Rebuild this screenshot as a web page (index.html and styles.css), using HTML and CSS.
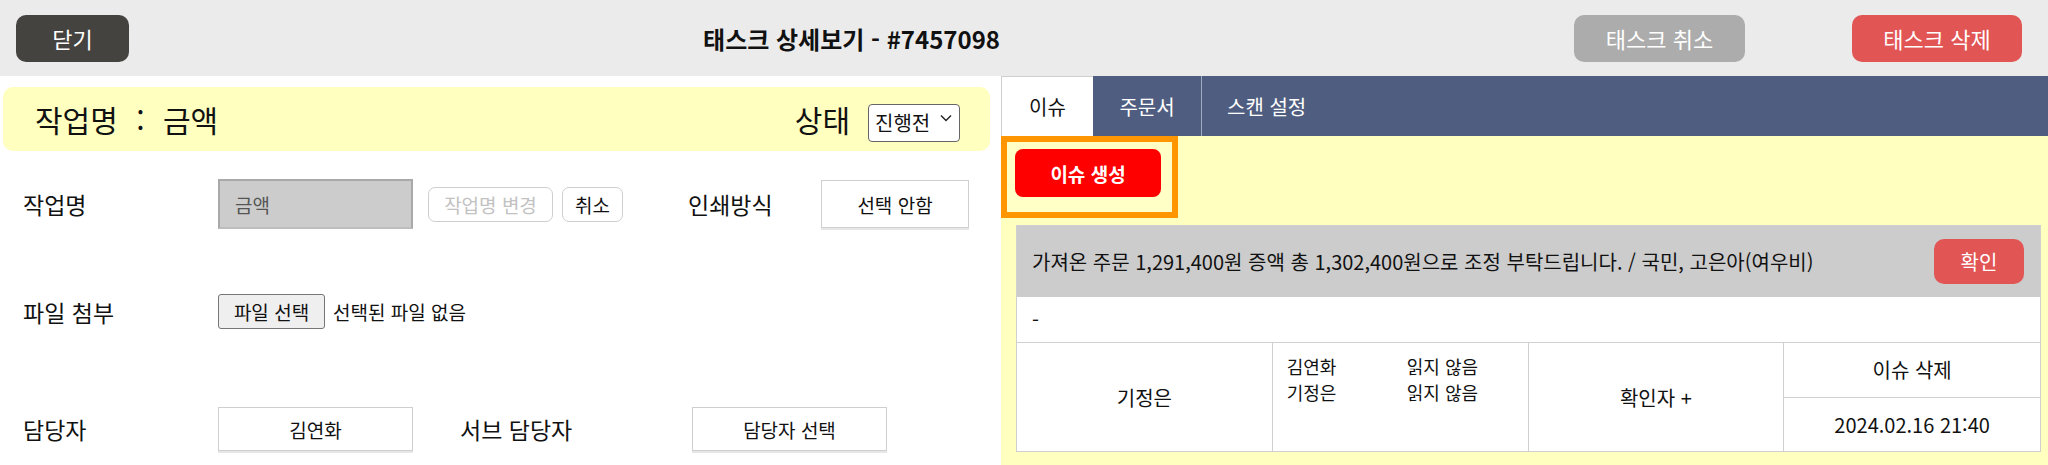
FILE: index.html
```html
<!DOCTYPE html>
<html lang="ko">
<head>
<meta charset="utf-8">
<title>태스크 상세보기</title>
<link rel="stylesheet" href="styles.css">
</head>
<body>
<header class="topbar">
  <button class="btn btn-dark btn-close">닫기</button>
  <h1 class="title">태스크 상세보기 - #7457098</h1>
  <div class="actions">
    <button class="btn btn-gray btn-cancel">태스크 취소</button>
    <button class="btn btn-red btn-delete">태스크 삭제</button>
  </div>
</header>
<main class="layout">
  <section class="left">
    <div class="job-head">
      <div class="job-title">작업명 <span class="colon">:</span> 금액</div>
      <div class="status">
        <span class="status-label">상태</span>
        <span class="select-wrap">
          <select class="status-select"><option>진행전</option></select>
          <svg class="chev" width="12" height="8" viewBox="0 0 12 8"><path d="M1 1.5 L6 6.5 L11 1.5" fill="none" stroke="#222" stroke-width="1.4"/></svg>
        </span>
      </div>
    </div>

    <div class="row row-name">
      <label class="lbl">작업명</label>
      <div class="name-input">금액</div>
      <button class="mini mini-disabled">작업명 변경</button>
      <button class="mini mini-cancel">취소</button>
      <label class="lbl lbl-print">인쇄방식</label>
      <div class="box box-print">선택 안함</div>
    </div>

    <div class="row row-file">
      <label class="lbl">파일 첨부</label>
      <button class="file-btn">파일 선택</button>
      <span class="file-none">선택된 파일 없음</span>
    </div>

    <div class="row row-owner">
      <label class="lbl">담당자</label>
      <div class="box box-owner">김연화</div>
      <label class="lbl lbl-sub">서브 담당자</label>
      <div class="box box-owner">담당자 선택</div>
    </div>
  </section>

  <section class="right">
    <nav class="tabs">
      <div class="tab tab-active">이슈</div>
      <div class="tab tab-sep">주문서</div>
      <div class="tab">스캔 설정</div>
    </nav>
    <div class="tab-body">
      <div class="create-wrap">
        <button class="btn-create">이슈 생성</button>
      </div>
      <div class="issue">
        <div class="issue-head">
          <span class="issue-text">가져온 주문 1,291,400원 증액 총 1,302,400원으로 조정 부탁드립니다. / 국민, 고은아(여우비)</span>
          <button class="btn-confirm">확인</button>
        </div>
        <div class="issue-desc">-</div>
        <div class="issue-grid">
          <div class="cell cell-center">기정은</div>
          <div class="cell cell-readers">
            <div class="reader"><span class="r-name">김연화</span><span class="r-state">읽지 않음</span></div>
            <div class="reader"><span class="r-name">기정은</span><span class="r-state">읽지 않음</span></div>
          </div>
          <div class="cell cell-center">확인자 +</div>
          <div class="cell cell-split">
            <div class="split-top">이슈 삭제</div>
            <div class="split-bottom">2024.02.16 21:40</div>
          </div>
        </div>
      </div>
    </div>
  </section>
</main>
</body>
</html>
```

FILE: styles.css
```css
* { box-sizing: border-box; }
html, body { margin: 0; padding: 0; }
body {
  width: 2048px;
  height: 465px;
  overflow: hidden;
  background: #ffffff;
  font-family: "Noto Sans CJK KR", "Noto Sans", sans-serif;
  color: #111;
}
button { font-family: inherit; cursor: pointer; }

/* top bar */
.topbar {
  height: 76px;
  background: #ebebeb;
  display: flex;
  align-items: center;
  justify-content: space-between;
  padding: 0 26px 0 16px;
}
.btn {
  height: 47px;
  border: none;
  border-radius: 10px;
  color: #fff;
  font-size: 22px;
  padding: 0;
}
.btn-dark { background: #454340; width: 113px; }
.btn-gray { background: #acacac; width: 171px; }
.btn-red { background: #e25555; width: 170px; }
.title {
  margin: 0;
  font-size: 24px;
  font-weight: 700;
  color: #111;
}
.actions { display: flex; gap: 107px; }

/* layout */
.layout {
  display: grid;
  grid-template-columns: 1001px 1047px;
  height: 389px;
}

/* left */
.left { padding: 11px 11px 0 3px; }
.job-head {
  height: 64px;
  background: #ffffbf;
  border-radius: 10px;
  display: flex;
  align-items: center;
  justify-content: space-between;
  padding: 0 30px 0 32px;
}
.job-title { font-size: 30px; }
.colon { margin: 0 10px; }
.status { display: flex; align-items: center; gap: 18px; font-size: 30px; }
.select-wrap { position: relative; display: inline-block; }
.status-select {
  appearance: none;
  -webkit-appearance: none;
  width: 92px;
  height: 38px;
  border: 1px solid #666;
  border-radius: 4px;
  background: #fff;
  font-family: inherit;
  font-size: 20px;
  padding: 0 0 0 6px;
  color: #111;
}
.chev { position: absolute; right: 8px; top: 18px; }

.row {
  display: flex;
  align-items: center;
  padding-left: 20px;
}
.lbl { font-size: 23px; width: 195px; flex: none; color: #111; }
.row-name { margin-top: 28px; height: 50px; }
.row-file { margin-top: 65px; height: 35px; }
.row-owner { margin-top: 78px; height: 44px; }

.name-input {
  width: 195px;
  height: 50px;
  background: #cccccc;
  border: 2px solid #a9a9a9;
  border-bottom-color: #bdbdbd;
  color: #555;
  font-size: 19px;
  display: flex;
  align-items: center;
  padding-left: 15px;
}
.mini {
  height: 35px;
  background: #fff;
  border: 1px solid #cfcfcf;
  border-radius: 7px;
  font-size: 19px;
  padding: 0 5px;
  color: #111;
}
.mini-disabled { width: 125px; margin-left: 15px; color: #c2c2c2; }
.mini-cancel { width: 61px; margin-left: 9px; }
.lbl-print { width: 133px; margin-left: 65px; }
.box {
  background: #fff;
  border: 1px solid #cfcfcf;
  box-shadow: 0 2px 0 #e6e6e6;
  display: flex;
  align-items: center;
  justify-content: center;
  font-size: 19px;
  color: #111;
}
.box-print { width: 148px; height: 48px; }
.box-owner { width: 195px; height: 44px; }
.lbl-sub { width: 232px; margin-left: 47px; }

.file-btn {
  width: 107px;
  height: 35px;
  background: #efefef;
  border: 1px solid #767676;
  border-radius: 3px;
  font-size: 19px;
  color: #111;
  padding: 0;
}
.file-none { font-size: 19px; margin-left: 8px; }

/* right */
.right {
  display: flex;
  flex-direction: column;
  background: #ffffbf;
}
.tabs {
  height: 60px;
  background: #4f5e80;
  display: flex;
  flex: none;
}
.tab {
  display: flex;
  align-items: center;
  padding: 0 25px;
  font-size: 20px;
  color: #fff;
}
.tab-active {
  background: #fff;
  color: #111;
  width: 92px;
  justify-content: center;
  padding: 0;
  border-left: 1px solid #cfcfcf;
  border-top: 1px solid #cfcfcf;
}
.tab-sep { border-right: 1px solid #a0abc0; width: 109px; justify-content: center; padding: 0; }

.tab-body { flex: 1; padding: 0 7px 0 0; }
.create-wrap {
  width: 177px;
  height: 82px;
  border: 6px solid #ff9500;
  background: #ffffc6;
  padding: 7px 0 0 8px;
}
.btn-create {
  width: 146px;
  height: 48px;
  background: #ff0000;
  border: none;
  border-radius: 8px;
  color: #fff;
  font-size: 19px;
  font-weight: 700;
}

.issue {
  margin: 7px 0 0 15px;
  border: 1px solid #d0d0d0;
  background: #fff;
}
.issue-head {
  height: 71px;
  background: #cccccc;
  display: flex;
  align-items: center;
  justify-content: space-between;
  padding: 0 16px 0 15px;
}
.issue-text { font-size: 20px; color: #111; }
.btn-confirm {
  width: 90px;
  height: 45px;
  border: none;
  border-radius: 10px;
  background: #e25555;
  color: #fff;
  font-size: 20px;
}
.issue-desc {
  height: 46px;
  display: flex;
  align-items: center;
  padding-left: 15px;
  font-size: 20px;
  border-bottom: 1px solid #d0d0d0;
}
.issue-grid {
  display: grid;
  grid-template-columns: repeat(4, 1fr);
  height: 108px;
}
.cell {
  border-right: 1px solid #d0d0d0;
  font-size: 20px;
  color: #111;
}
.cell:last-child { border-right: none; }
.cell-center { display: flex; align-items: center; justify-content: center; }
.cell-readers { padding: 10px 0 0 14px; font-size: 18px; }
.reader { display: flex; line-height: 26px; height: 26px; }
.r-name { width: 120px; }
.cell-split { display: flex; flex-direction: column; }
.split-top, .split-bottom {
  flex: 1;
  display: flex;
  align-items: center;
  justify-content: center;
}
.split-top { border-bottom: 1px solid #d0d0d0; }
```
